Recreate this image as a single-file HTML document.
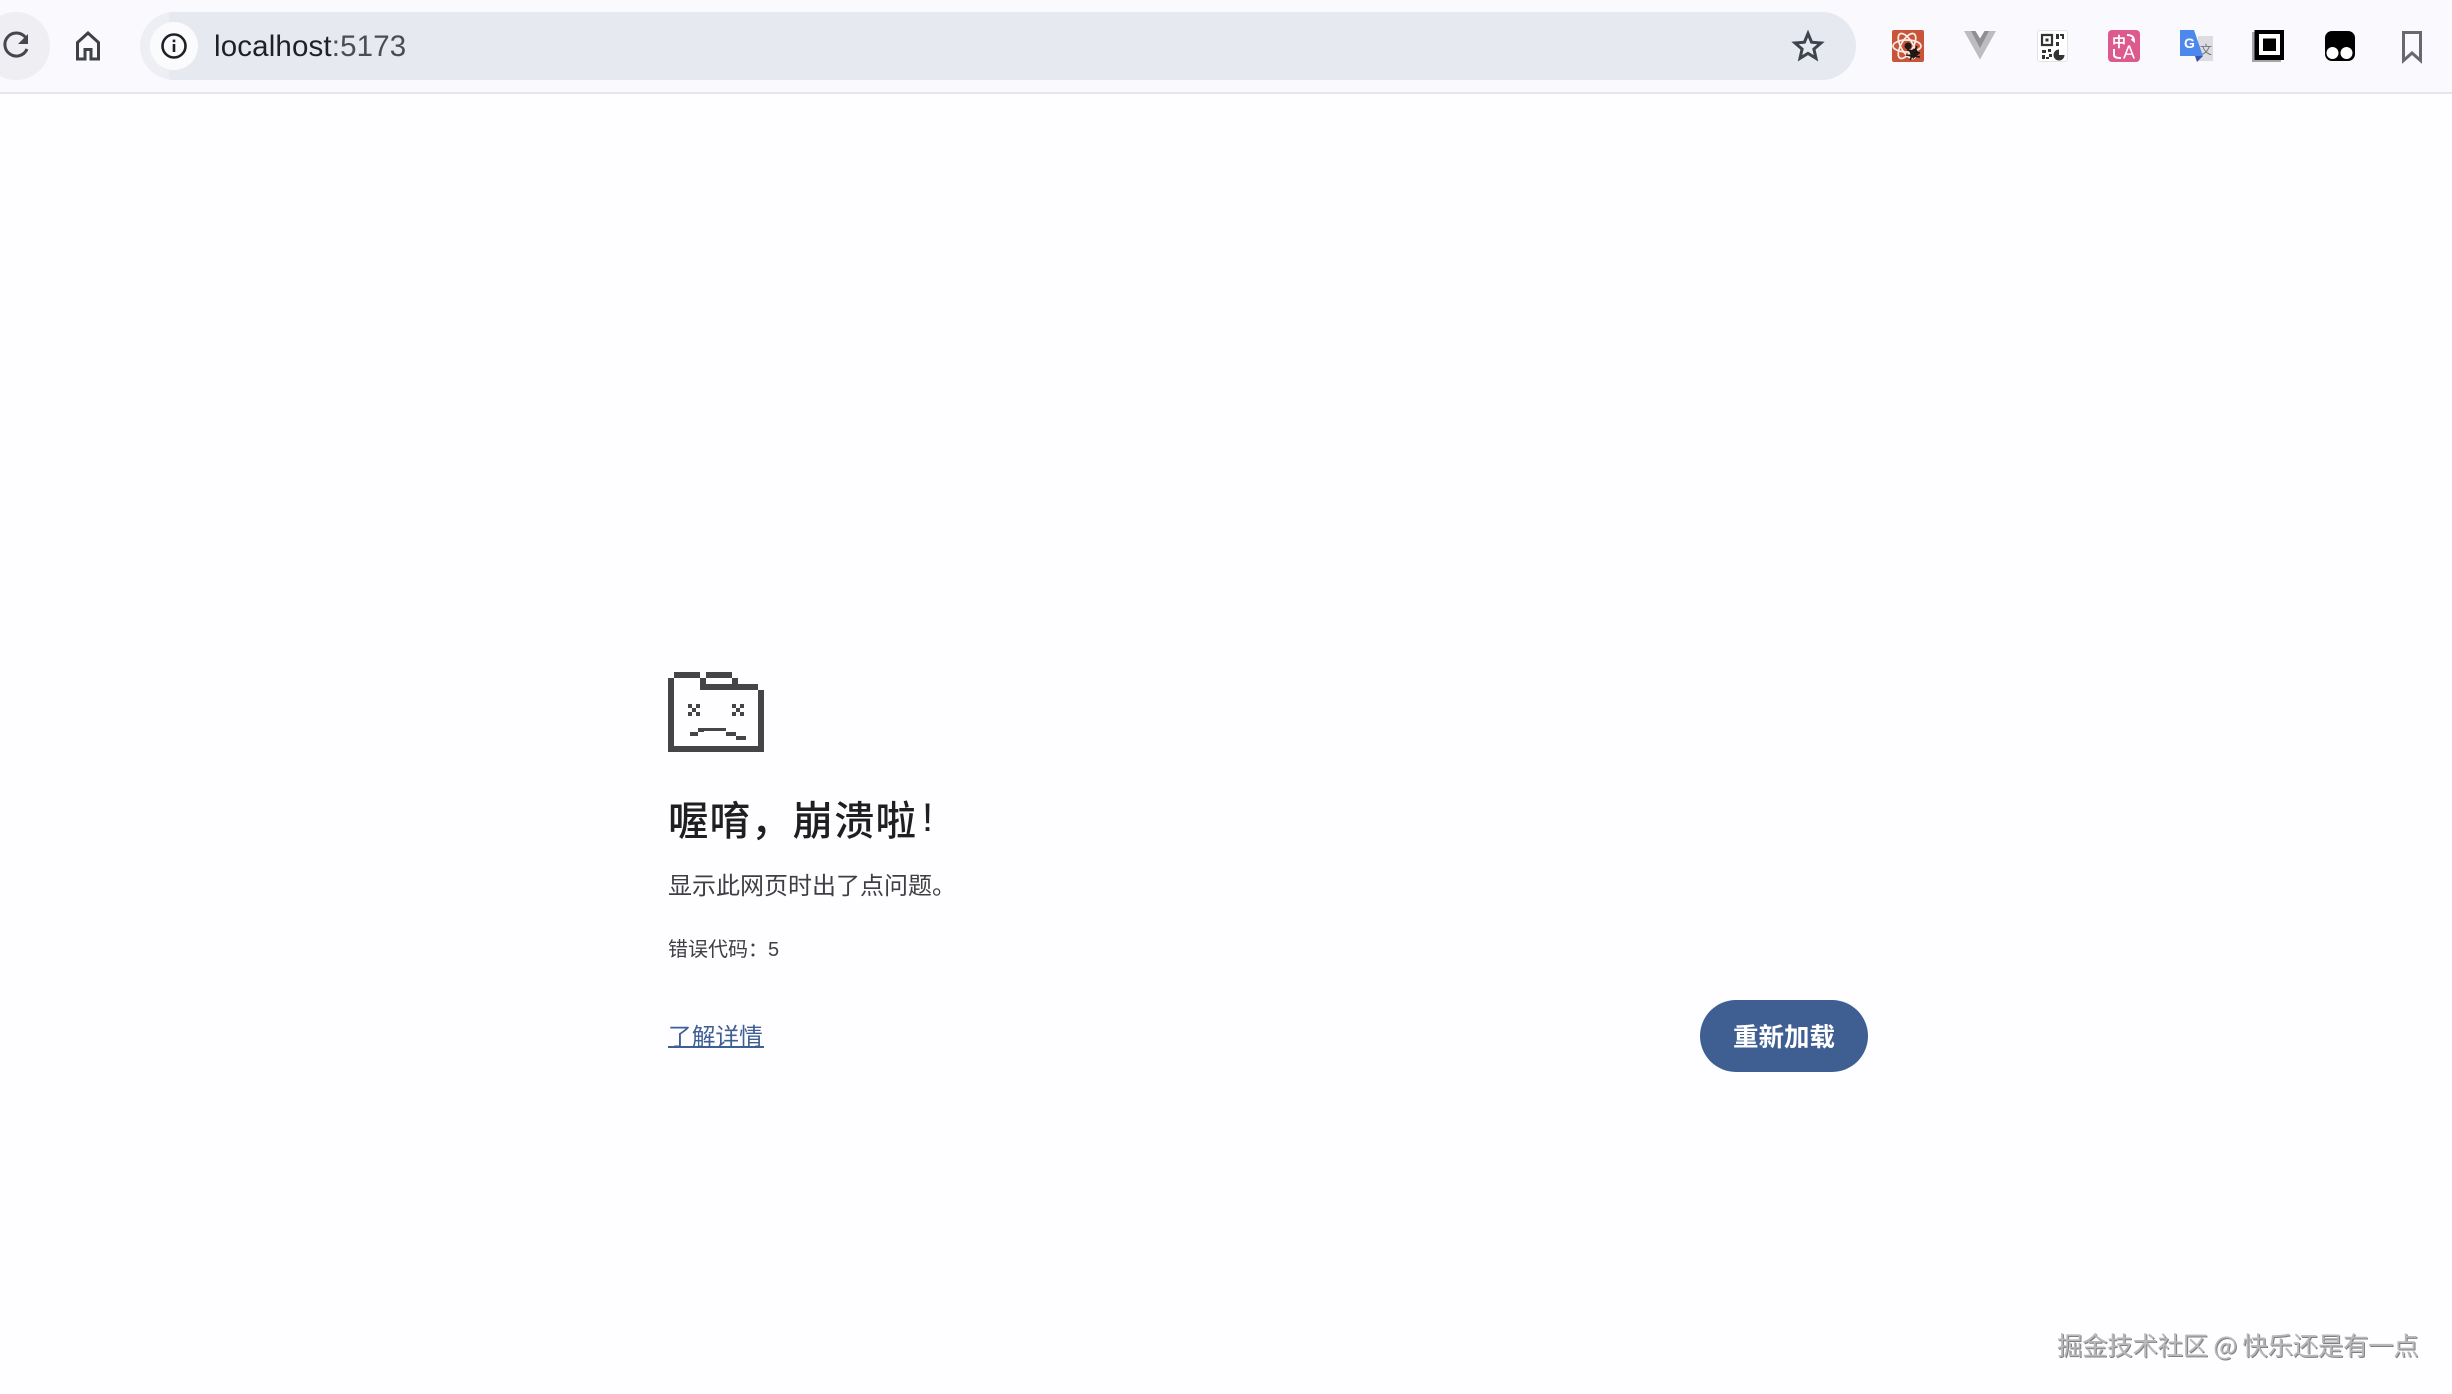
<!DOCTYPE html>
<html lang="zh-CN">
<head>
<meta charset="utf-8">
<title>localhost:5173</title>
<style>
html,body{margin:0;padding:0;width:2452px;height:1394px;overflow:hidden;background:#fefdff;}
body{position:relative;font-family:"Liberation Sans","Noto Sans CJK SC",sans-serif;}
.a{position:absolute;white-space:nowrap;}
.cjk{font-family:"Noto Sans CJK SC","Liberation Sans",sans-serif;}
svg{position:absolute;overflow:visible;}
</style>
</head>
<body>
<div class="a" style="left:0;top:0;width:2452px;height:92px;background:#f9f9fe;"></div>
<div class="a" style="left:0;top:92px;width:2452px;height:2px;background:#e6e6ea;"></div>

<div class="a" style="left:-18px;top:12px;width:68px;height:68px;border-radius:34px;background:#eeeef3;"></div>
<div class="a" style="left:140px;top:12px;width:1716px;height:68px;border-radius:34px;background:linear-gradient(90deg,#eeeff4 0,#eeeff4 28px,#e6e9f0 30px);"></div>
<div class="a" style="left:150px;top:22px;width:48px;height:48px;border-radius:24px;background:#fbfbfe;"></div>

<svg style="left:0;top:0" width="40" height="92" viewBox="0 0 40 92">
  <path d="M25.5 37.500A11.500 11.500 0 1 0 27 49" fill="none" stroke="#45474d" stroke-width="3"/>
  <path d="M28 34V44H18Z" fill="#45474d"/>
</svg>
<svg style="left:70px;top:28px" width="36" height="36" viewBox="0 0 36 36">
  <path d="M18 5L7.500 14.500V31H15V21.500H21V31H28.500V14.500Z" fill="none" stroke="#3f4147" stroke-width="3"/>
</svg>
<svg style="left:160px;top:32px" width="28" height="28" viewBox="0 0 28 28">
  <circle cx="14" cy="14" r="11.500" fill="none" stroke="#1f2024" stroke-width="2.600"/>
  <rect x="12.700" y="12" width="2.600" height="8" fill="#1f2024"/>
  <rect x="12.700" y="7.600" width="2.600" height="2.600" fill="#1f2024"/>
</svg>
<div class="a" style="left:214px;top:30px;font-size:29.500px;line-height:34px;letter-spacing:0.150px;color:#1f2126;">localhost<span style="color:#4a4d55">:5173</span></div>
<svg style="left:1790px;top:28px" width="36" height="36" viewBox="0 0 36 36">
  <path d="M18 5.500L21.600 14.200L31 15L23.900 21.100L26 30.300L18 25.400L10 30.300L12.100 21.100L5 15L14.400 14.200Z" fill="none" stroke="#3f4350" stroke-width="3"/>
</svg>

<!-- extension: atom bug -->
<svg style="left:1892px;top:30px" width="32" height="32" viewBox="0 0 32 32">
  <rect width="32" height="32" rx="2" fill="#c8553a"/>
  <g fill="none" stroke="#fbeee8" stroke-width="1.700">
    <ellipse cx="15" cy="16" rx="14" ry="6"/>
    <ellipse cx="15" cy="16" rx="14" ry="6" transform="rotate(60 15 16)"/>
    <ellipse cx="15" cy="16" rx="14" ry="6" transform="rotate(120 15 16)"/>
  </g>
  <circle cx="16" cy="16" r="3.500" fill="#221a18"/>
  <path d="M17 21L24 18L27 24L21 29Z" fill="#1d1715"/>
  <path d="M14 25L28 27M18 30L25 16M15 20L28 23" stroke="#1d1715" stroke-width="1.600"/>
</svg>
<!-- extension: vue grey -->
<svg style="left:1964px;top:30px" width="32" height="30" viewBox="0 0 32 30">
  <path d="M0 1H9L16 12L23 1H32L16 29.500Z" fill="#bdbdc0"/>
  <path d="M7 1H11.500L16 8.500L20.500 1H25L16 18Z" fill="#909094"/>
</svg>
<!-- extension: QR -->
<svg style="left:2037px;top:30px" width="32" height="33" viewBox="0 0 32 33">
  <rect x="0.500" y="0.500" width="30" height="31" rx="2.500" fill="#fff" stroke="#e4e4e6" stroke-width="1"/>
  <path d="M5 5H15V15H5Z" fill="none" stroke="#333" stroke-width="2.200"/>
  <rect x="8.500" y="8.500" width="3" height="3" fill="#333"/>
  <path d="M19 4H22V9H19ZM23 4H27V9H25V6H23ZM19 12H22V16H19Z" fill="#333"/>
  <path d="M5 20H9V23H5ZM11 19H14V22H11ZM5 25H8V29H5ZM12 24H15V27H12ZM9 27H12V29H9Z" fill="#333"/>
  <path d="M22 19.500A5.500 5.500 0 1 0 27.500 25H22Z" fill="#333"/>
</svg>
<!-- extension: translate pink -->
<svg style="left:2108px;top:30px" width="32" height="32" viewBox="0 0 32 32">
  <rect width="32" height="32" rx="4" fill="#dc5a8e"/>
  <text x="4" y="17" font-family="Noto Sans CJK SC,sans-serif" font-size="14" font-weight="700" fill="#fff">中</text>
  <text x="15" y="28.500" font-family="Liberation Sans,sans-serif" font-size="18" fill="#fff">A</text>
  <path d="M19 5C24 5 26 7 26 11L23.500 9M6 19V25C6 27 8 28 13 28" fill="none" stroke="#fff" stroke-width="2"/>
</svg>
<!-- extension: google translate -->
<svg style="left:2180px;top:30px" width="33" height="32" viewBox="0 0 33 32">
  <rect x="18" y="6" width="15" height="25" fill="#dcdce2"/>
  <text x="20" y="24" font-family="Noto Sans CJK SC,sans-serif" font-size="12" fill="#70737a">文</text>
  <path d="M0 0H14L23 26H0Z" fill="#4f88ec"/>
  <path d="M15 26H23L17 32Z" fill="#3f51a8"/>
  <text x="4" y="18" font-family="Liberation Sans,sans-serif" font-size="14" font-weight="700" fill="#fff">G</text>
</svg>
<!-- extension: square -->
<svg style="left:2252px;top:30px" width="32" height="32" viewBox="0 0 32 32">
  <rect x="0" y="2" width="29" height="30" fill="#a4a4a7"/>
  <rect x="2.500" y="0" width="29.500" height="30" fill="#000"/>
  <rect x="7" y="4" width="21" height="21" fill="#fff"/>
  <rect x="11" y="8.500" width="13" height="12.500" fill="#000"/>
</svg>
<!-- extension: tampermonkey -->
<svg style="left:2325px;top:31px" width="30" height="30" viewBox="0 0 30 30">
  <rect x="0" y="0" width="30" height="30" rx="7" fill="#000"/>
  <circle cx="7.500" cy="22" r="6" fill="#fff"/>
  <circle cx="21.500" cy="22" r="6" fill="#fff"/>
</svg>
<!-- bookmark -->
<svg style="left:2402px;top:30px" width="20" height="33" viewBox="0 0 20 33">
  <path d="M1.500 2.500H18.500V30.500L10 23L1.500 30.500Z" fill="none" stroke="#68686e" stroke-width="3"/>
</svg>

<!-- sad folder -->
<svg style="left:668px;top:672px" width="96" height="80" viewBox="0 0 96 80" shape-rendering="crispEdges">
  <g fill="#454548">
    <rect x="6" y="0" width="26" height="6"/>
    <rect x="38" y="0" width="26" height="6"/>
    <rect x="0" y="6" width="6" height="74"/>
    <rect x="32" y="6" width="6" height="12"/>
    <rect x="32" y="12" width="38" height="6"/>
    <rect x="64" y="6" width="6" height="6"/>
    <rect x="70" y="12" width="20" height="6"/>
    <rect x="90" y="18" width="6" height="62"/>
    <rect x="0" y="74" width="96" height="6"/>
    <path d="M20 32h4v4h-4zM28 32h4v4h-4zM24 36h4v4h-4zM20 40h4v4h-4zM28 40h4v4h-4z"/>
    <path d="M64 32h4v4h-4zM72 32h4v4h-4zM68 36h4v4h-4zM64 40h4v4h-4zM72 40h4v4h-4z"/>
    <rect x="22" y="60" width="8" height="4"/>
    <rect x="30" y="57" width="6" height="3"/>
    <rect x="30" y="56" width="28" height="3"/>
    <rect x="58" y="60" width="10" height="4"/>
    <rect x="68" y="64" width="10" height="4"/>
  </g>
</svg>

<div class="a cjk" style="left:668px;top:788px;font-size:40.500px;line-height:60px;letter-spacing:1px;font-weight:500;color:#1f1f22;">喔唷，崩溃啦</div>
<div class="a" style="left:922px;top:788px;font-size:40px;line-height:60px;color:#1f1f22;">!</div>
<div class="a cjk" style="left:668px;top:866px;font-size:24px;line-height:36px;color:#3e3f43;">显示此网页时出了点问题。</div>
<div class="a cjk" style="left:668px;top:933px;font-size:20px;line-height:30px;color:#3e3f43;">错误代码：<span style="font-family:'Liberation Sans',sans-serif">5</span></div>
<div class="a cjk" style="left:668px;top:1017px;font-size:23.700px;line-height:36px;color:#3f5f94;">了解详情</div>
<div class="a" style="left:668px;top:1046px;width:96px;height:2px;background:#3f5f94;"></div>

<div class="a" style="left:1700px;top:1000px;width:168px;height:72px;border-radius:36px;background:#3f5f92;"></div>
<div class="a cjk" style="left:1733px;top:1017px;font-size:25.500px;line-height:38px;font-weight:700;color:#fff;">重新加载</div>

<div class="a cjk" style="left:2057px;top:1326px;font-size:25.500px;line-height:38px;letter-spacing:-0.350px;color:#b8b8ba;text-shadow:1px 1px 0 #808083;">掘金技术社区 @ 快乐还是有一点</div>
</body>
</html>
